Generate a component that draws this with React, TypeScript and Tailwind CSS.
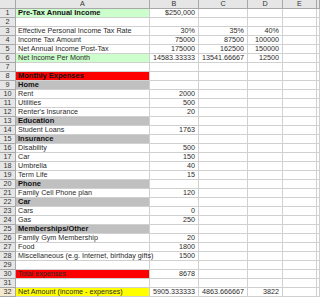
import React from 'react';

type Kind = 'plain' | 'green' | 'greenBold' | 'red' | 'redBold' | 'gray' | 'yellow';

interface Row {
  a?: string;
  b?: string;
  c?: string;
  d?: string;
  kind?: Kind;
}

const rows: Row[] = [
  { a: 'Pre-Tax Annual Income', b: '$250,000', kind: 'greenBold' },
  {},
  { a: 'Effective Personal Income Tax Rate', b: '30%', c: '35%', d: '40%' },
  { a: 'Income Tax Amount', b: '75000', c: '87500', d: '100000' },
  { a: 'Net Annual Income Post-Tax', b: '175000', c: '162500', d: '150000' },
  { a: 'Net Income Per Month', b: '14583.33333', c: '13541.66667', d: '12500', kind: 'green' },
  {},
  { a: 'Monthly Expenses', kind: 'redBold' },
  { a: 'Home', kind: 'gray' },
  { a: 'Rent', b: '2000' },
  { a: 'Utilities', b: '500' },
  { a: "Renter's Insurance", b: '20' },
  { a: 'Education', kind: 'gray' },
  { a: 'Student Loans', b: '1763' },
  { a: 'Insurance', kind: 'gray' },
  { a: 'Disability', b: '500' },
  { a: 'Car', b: '150' },
  { a: 'Umbrella', b: '40' },
  { a: 'Term Life', b: '15' },
  { a: 'Phone', kind: 'gray' },
  { a: 'Family Cell Phone plan', b: '120' },
  { a: 'Car', kind: 'gray' },
  { a: 'Cars', b: '0' },
  { a: 'Gas', b: '250' },
  { a: 'Memberships/Other', kind: 'gray' },
  { a: 'Family Gym Membership', b: '20' },
  { a: 'Food', b: '1800' },
  { a: 'Miscellaneous (e.g. Internet, birthday gifts)', b: '1500' },
  {},
  { a: 'Total expenses', b: '8678', kind: 'red' },
  {},
  { a: 'Net Amount (income - expenses)', b: '5905.333333', c: '4863.666667', d: '3822', kind: 'yellow' },
];

const fillFor = (kind: Kind) => {
  switch (kind) {
    case 'green':
    case 'greenBold':
      return 'bg-[#ccffcc]';
    case 'red':
    case 'redBold':
      return 'bg-[#ff0000]';
    case 'gray':
      return 'bg-[#c0c0c0]';
    case 'yellow':
      return 'bg-[#ffff00]';
    default:
      return 'bg-white';
  }
};

const isBold = (kind: Kind) => kind === 'greenBold' || kind === 'redBold' || kind === 'gray';

const cell = 'border-r border-b border-[#d0d0d0] overflow-visible whitespace-nowrap leading-[8px]';
const head = 'border-r border-b border-[#a8a8a8] bg-[#e6e6e6] text-[#333] flex items-center justify-center leading-[8px]';

export default function App() {
  return (
    <div
      className="w-[320px] h-[298px] overflow-hidden bg-white text-[7.2px] text-[#2a2a2a]"
      style={{ fontFamily: '"Liberation Sans", Arial, sans-serif' }}
    >
      <div className="grid grid-cols-[16px_134px_49px_49px_35px_34px_3px] auto-rows-[9px]">
        <div className={head} />
        <div className={head}>A</div>
        <div className={head}>B</div>
        <div className={head}>C</div>
        <div className={head}>D</div>
        <div className={head}>E</div>
        <div className={head} />

        {rows.map((r, i) => {
          const kind = r.kind ?? 'plain';
          const n = i + 1;
          return (
            <React.Fragment key={n}>
              <div className={`${head} ${n === 32 ? 'bg-[#f4ead0]' : ''}`}>{n}</div>
              <div
                className={`${cell} ${fillFor(kind)} pl-[2px] flex items-center relative z-10 ${
                  isBold(kind) ? 'font-bold text-[7.5px] text-[#111]' : ''
                }`}
              >
                {r.a}
              </div>
              <div className={`${cell} pr-[3px] flex items-center justify-end`}>{r.b}</div>
              <div className={`${cell} pr-[3px] flex items-center justify-end`}>{r.c}</div>
              <div className={`${cell} pr-[3px] flex items-center justify-end`}>{r.d}</div>
              <div className={cell} />
              <div className={cell} />
            </React.Fragment>
          );
        })}
      </div>
    </div>
  );
}
